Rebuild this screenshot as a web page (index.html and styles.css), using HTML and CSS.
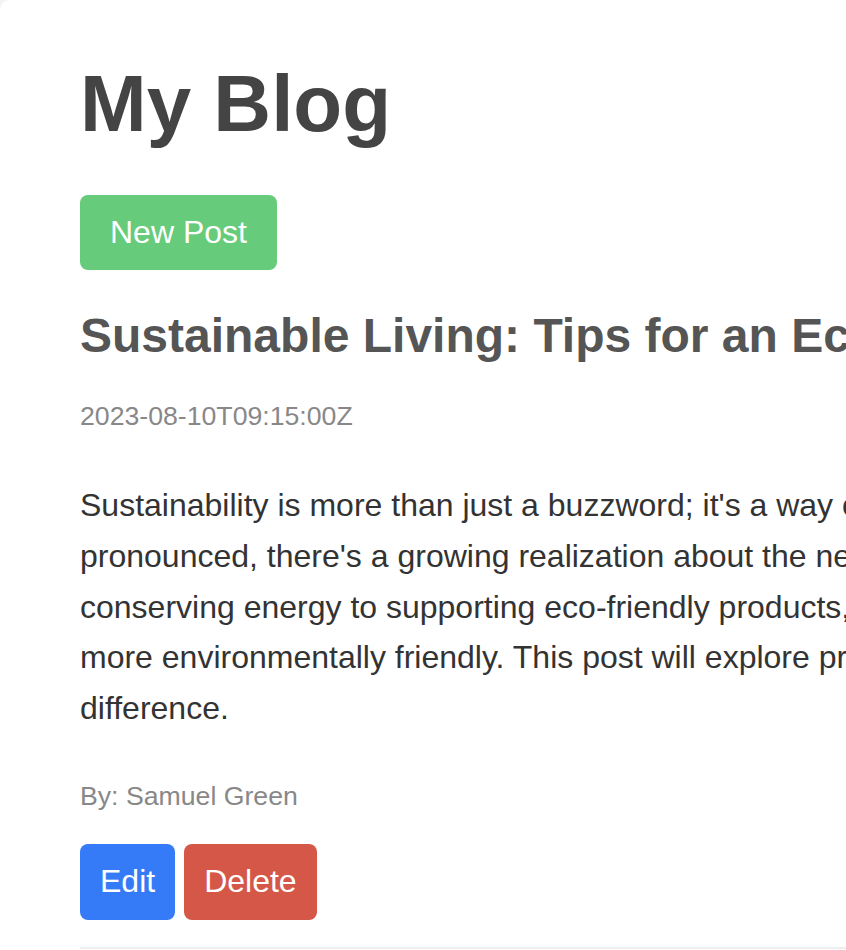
FILE: index.html
```html
<!DOCTYPE html>
<html lang="en">
<head>
<meta charset="utf-8">
<title>My Blog</title>
<link rel="stylesheet" href="styles.css">
</head>
<body>
<div class="card">
  <h1 class="site-title">My Blog</h1>
  <button class="btn btn-new">New Post</button>
  <article class="post">
    <h2 class="post-title">Sustainable Living: Tips for an Eco-Friendly Lifestyle</h2>
    <p class="meta date">2023-08-10T09:15:00Z</p>
    <p class="post-body">Sustainability is more than just a buzzword; it's a way of life that can help protect our planet for future generations. As the effects of climate change become more<br>pronounced, there's a growing realization about the need for individuals to adopt sustainable practices in their everyday lives. From reducing waste and<br>conserving energy to supporting eco-friendly products, there are numerous ways to make our daily routines<br>more environmentally friendly. This post will explore practical tips for living sustainably and making a<br>difference.</p>
    <p class="meta author">By: Samuel Green</p>
    <div class="actions">
      <button class="btn btn-edit">Edit</button>
      <button class="btn btn-delete">Delete</button>
    </div>
  </article>
</div>
</body>
</html>
```
FILE: styles.css
```css
html, body {
  margin: 0;
  padding: 0;
  overflow: hidden;
}
body {
  background: #f4f4f4;
  font-family: "Liberation Sans", Arial, Helvetica, sans-serif;
  color: #333;
}
.card {
  background: #fff;
  border-radius: 10px;
  width: 1600px;
  padding: 58px 80px 40px;
  box-sizing: border-box;
  min-height: 1000px;
}
.site-title {
  margin: 0;
  font-size: 80px;
  line-height: 92px;
  font-weight: bold;
  color: #444;
}
.btn {
  font-family: "Liberation Sans", Arial, Helvetica, sans-serif;
  font-size: 32px;
  line-height: 34px;
  color: #fff;
  border: none;
  border-radius: 8px;
  cursor: pointer;
}
.btn-new {
  margin-top: 45px;
  padding: 20px 30px 21px;
  background: #66cb7b;
  display: block;
}
.post {
  border-bottom: 2px solid #eee;
  padding-bottom: 27px;
}
.post-title {
  margin: 38px 0 0;
  font-size: 48px;
  line-height: 56px;
  font-weight: bold;
  color: #555;
  white-space: nowrap;
}
.meta {
  font-size: 26.667px;
  line-height: 30px;
  color: #888;
  margin: 0;
}
.date {
  margin-top: 37px;
}
.post-body {
  margin: 49px 0 0;
  font-size: 32px;
  line-height: 50.8px;
  color: #333;
  white-space: nowrap;
}
.author {
  margin-top: 47px;
}
.actions {
  margin-top: 33px;
  display: flex;
  gap: 9px;
}
.btn-edit {
  padding: 20px 20px 22px;
  background: #357af6;
}
.btn-delete {
  padding: 20px 20px 22px;
  background: #d55747;
}
```
